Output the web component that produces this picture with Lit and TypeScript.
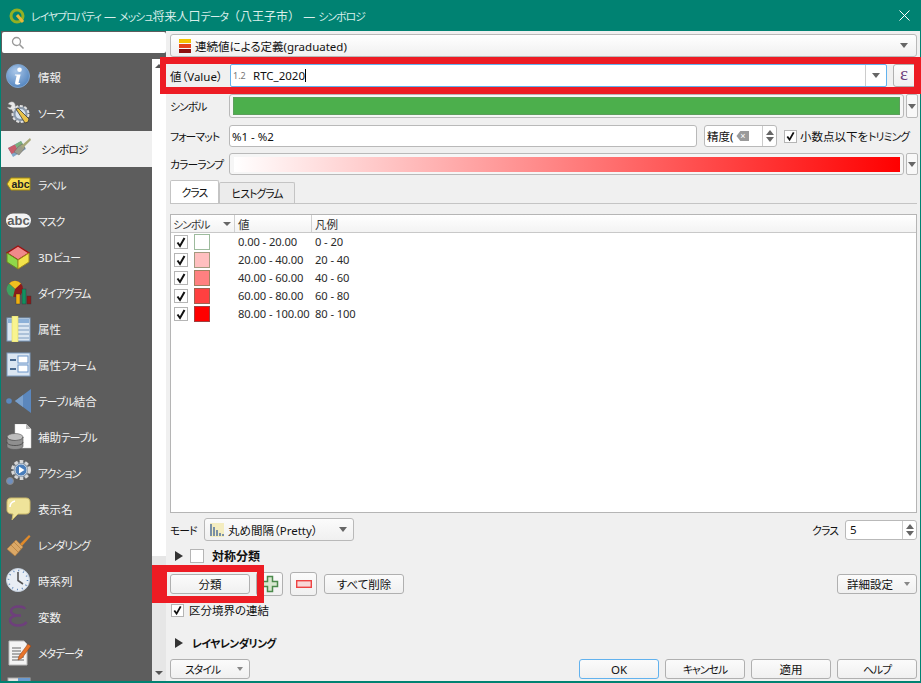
import { LitElement, html, css, svg } from 'lit';
import { customElement } from 'lit/decorators.js';

const ICONS: Record<string, unknown> = {
  info: svg`<defs><radialGradient id="ig" cx=".4" cy=".3" r=".8"><stop offset="0" stop-color="#a9c6e8"/><stop offset="1" stop-color="#4a7ebb"/></radialGradient></defs>
    <circle cx="12" cy="12" r="11.5" fill="url(#ig)" stroke="#7fa3cc"/>
    <circle cx="13.5" cy="5.8" r="2.3" fill="#fff"/>
    <path d="M9 10.5h5.6l-2 8c-.1.6.3.7 1.6.4l-.2 1.1c-1.8.9-5.3 1.2-4.9-1.300l1.500-6.900c-.5-.2-1.200-.2-1.800-.2z" fill="#fff"/>`,
  source: svg`<path d="M2 4c2-3 6-3 7 0 .5 1.500 0 2.500 1 3.500l2 2-3 3-2.500-2.500c-1.500-.5-4.500-.2-5-3l3 .5 1-2z" fill="#e8e8e8" stroke="#888" stroke-width=".5"/>
    <circle cx="14.500" cy="14" r="8" fill="#8a98a8" stroke="#e0e0e0" stroke-width="2" stroke-dasharray="3 1.600"/>
    <circle cx="14.500" cy="14" r="5" fill="#d7e3f0"/>
    <path d="M10 9l2-1 11 11-1 3-3 1z" fill="#e8c24a" stroke="#3a3a3a" stroke-width=".8"/>`,
  symbology: svg`<path d="M2 12l13-7 5 8-13 8z" fill="#7fa6c8"/>
    <path d="M2 12l7-3.500 3 6-6.500 3.500z" fill="#c95c6a"/>
    <path d="M9 8.500l6-3.500 2.500 4-6 3.500z" fill="#7bb07b"/>
    <path d="M12 11l4-3 3 4-6 7-5-3z" fill="#9a9a8a" stroke="#666" stroke-width=".5"/>
    <path d="M15 10L24 2l1 2-8 8z" fill="#a8a878"/>`,
  label: svg`<path d="M1 12l4-6h19v12H5z" fill="#f7dc4d" stroke="#a38a10"/>
    <text x="14.500" y="16" text-anchor="middle" class="abc">abc</text>`,
  mask: svg`<rect x="0" y="5.500" width="25" height="14" rx="7" fill="#f4f4f4"/>
    <text x="12.500" y="17" text-anchor="middle" class="abc2">abc</text>`,
  view3d: svg`<path d="M12 2l11 7-11 7L1 9z" fill="#f08a8a" stroke="#a01010" stroke-width="1.400"/>
    <path d="M1 9l11 7v9L1 18z" fill="#8fd84a" stroke="#6a8a20"/>
    <path d="M23 9L12 16v9l11-7z" fill="#f2e24a" stroke="#a08a20"/>`,
  diagram: svg`<circle cx="9" cy="9" r="8" fill="#8d1a1a"/>
    <path d="M9 9L3 3.500A8 8 0 0 1 15 3.500z" fill="#f0c020"/>
    <path d="M9 9L3 3.500A8 8 0 0 0 7 17z" fill="#3fa060"/>
    <rect x="10" y="14" width="4" height="10" fill="#f0b010" stroke="#333" stroke-width=".4"/>
    <rect x="16" y="9" width="4" height="15" fill="#119060" stroke="#333" stroke-width=".4"/>
    <rect x="21" y="16" width="4" height="8" fill="#8d1a1a" stroke="#333" stroke-width=".4"/>`,
  attr: svg`<rect x="1" y="2" width="23" height="23" fill="#dbe6f2" stroke="#7c9cc0"/>
    <rect x="2" y="3" width="21" height="4" fill="#8cb0d8"/>
    <path d="M11 10h12M11 14h12M11 18h12M11 22h12" stroke="#7c9cc0"/>
    <rect x="6" y="0" width="6" height="26" fill="#f8f490" stroke="#e0d860" stroke-width=".6"/>`,
  form: svg`<rect x="1" y="1" width="23" height="23" fill="#dbe6f2" stroke="#7c9cc0"/>
    <path d="M4 8h6M4 17h6" stroke="#4a6a90" stroke-width="2"/>
    <rect x="12" y="4" width="10" height="7" fill="#fff" stroke="#6a94c8"/>
    <rect x="12" y="13" width="10" height="7" fill="#fff" stroke="#6a94c8"/>`,
  join: svg`<circle cx="3" cy="13" r="2.800" fill="#5b87bd"/>
    <path d="M25 1v24L9 13z" fill="#5b87bd"/><path d="M17 7v12l-8-6z" fill="#7aa0cc"/>`,
  aux: svg`<path d="M9 0h11l5 5v19H9z" fill="#fff" stroke="#ccc" stroke-width=".5"/>
    <path d="M20 0v5h5z" fill="#bbb"/>
    <ellipse cx="9" cy="13" rx="8" ry="3.500" fill="#bdbdbd" stroke="#555" stroke-width=".6"/>
    <path d="M1 13v9c0 2 3 3.500 8 3.500s8-1.500 8-3.500v-9c0 2-3 3.500-8 3.500s-8-1.500-8-3.500z" fill="#8f8f8f" stroke="#555" stroke-width=".6"/>
    <path d="M1 18c0 2 3 3.500 8 3.500s8-1.500 8-3.500" fill="none" stroke="#444" stroke-width=".8"/>`,
  action: svg`<circle cx="15" cy="10" r="8.500" fill="#7e8a96" stroke="#d8d8d8" stroke-width="3" stroke-dasharray="3.500 2"/>
    <circle cx="15" cy="10" r="6" fill="#4a7ebb" stroke="#cfd8e4"/>
    <path d="M13 6.500l5.500 3.500-5.500 3.500z" fill="#fff"/>
    <circle cx="4" cy="21" r="3.500" fill="#6f8fbf" stroke="#8a8a8a"/>`,
  display: svg`<path d="M5 2h15c3 0 4 2 4 4v8c0 3-2 4-4 4h-8l-6 6 1-6c-3 0-6-1-6-4V6c0-3 2-4 4-4z" fill="#efe39a" stroke="#cbb96a"/>
    <path d="M4 11c0-3 1-5 5-6" stroke="#fff" stroke-width="1.500" fill="none"/>`,
  rendering: svg`<path d="M14 12L23 3l1.500 1.500L16 14z" fill="#e08a2a"/>
    <path d="M1 17l9-9 7 7-8 9z" fill="#dba866" stroke="#b07a3a" stroke-width=".6"/>
    <path d="M5 13l7 7M8 10l7 7" stroke="#b07a3a" stroke-width=".7"/>`,
  time: svg`<circle cx="12" cy="12" r="11.500" fill="#e9eef4" stroke="#c4d0de"/>
    <circle cx="12" cy="12" r="9.500" fill="none" stroke="#5b87bd" stroke-width="1.600" stroke-dasharray="1 3.970"/>
    <path d="M12 4v8.500l5 3.500" fill="none" stroke="#555" stroke-width="1.600"/>`,
  variable: svg`<path d="M19 5c-1-2-3-2.500-6-2.500-5 0-8 2-8 4.500 0 3 3 4 6 4.500-4 .5-7 2-7 5 0 3 4 5 8 5 4 0 7-1 8.500-3.500M8 11.500h7" fill="none" stroke="#6e3f7c" stroke-width="2.600"/>`,
  metadata: svg`<path d="M3 1h15l3 3v21H3z" fill="#f4f4f4" stroke="#bbb"/>
    <path d="M6 8h9M6 11h9M6 14h10M6 17h12M6 20h12" stroke="#666"/>
    <path d="M13 16L22 4l3 2-9 12-4 2z" fill="#e8742a" stroke="#8a3a10" stroke-width=".5"/>`,
  server: svg`<rect x="2" y="2" width="22" height="22" fill="#e4e4e4" stroke="#aaa"/><rect x="12" y="2" width="12" height="6" fill="#6a9ad0"/>`,
};

const NAV = [
  ['info', '情報'], ['source', 'ソース'], ['symbology', 'シンボロジ'], ['label', 'ラベル'],
  ['mask', 'マスク'], ['view3d', '3Dビュー'], ['diagram', 'ダイアグラム'], ['attr', '属性'],
  ['form', '属性フォーム'], ['join', 'テーブル結合'], ['aux', '補助テーブル'], ['action', 'アクション'],
  ['display', '表示名'], ['rendering', 'レンダリング'], ['time', '時系列'], ['variable', '変数'],
  ['metadata', 'メタデータ'], ['server', ''],
];

const CLASSES = [
  { value: '0.00 - 20.00', legend: '0 - 20', fill: '#ffffff', edge: '#9dbb9d' },
  { value: '20.00 - 40.00', legend: '20 - 40', fill: '#ffbfbf', edge: '#a39a80' },
  { value: '40.00 - 60.00', legend: '40 - 60', fill: '#ff8080', edge: '#a08060' },
  { value: '60.00 - 80.00', legend: '60 - 80', fill: '#ff4040', edge: '#a06050' },
  { value: '80.00 - 100.00', legend: '80 - 100', fill: '#ff0000', edge: '#a04040' },
];

// the system font in the shot has much narrower katakana than Noto, so runs get their own span
const jp = (text: string) =>
  text.split(/([\u30A0-\u30FF]+)/).map((part, i) => (i % 2 ? html`<span class="k">${part}</span>` : part));

const check = svg`<svg width="12" height="12" viewBox="0 0 12 12"><path d="M2.500 6.500l2.500 3.500 4.500-8" fill="none" stroke="#111" stroke-width="2"/></svg>`;
const arrow = html`<span class="arrow"></span>`;
const spinner = html`<span class="spin"><i class="up"></i><i class="down"></i></span>`;

@customElement('app-root')
export class AppRoot extends LitElement {
  static styles = css`
    :host {
      display: block;
      position: relative;
      width: 921px;
      height: 683px;
      overflow: hidden;
      background: #f0f0f0;
      color: #111;
      font: 11.500px "Noto Sans", "Noto Sans CJK JP", sans-serif;
      font-feature-settings: "palt";
    }
    .k { font-size: 10.800px; letter-spacing: -.9px; font-feature-settings: "palt"; }
    .window {
      display: flex;
      flex-direction: column;
      height: 100%;
      box-sizing: border-box;
      border: solid #008272;
      border-width: 0 1px 2px 1px;
    }
    .title {
      flex: none;
      display: flex;
      align-items: center;
      height: 31px;
      margin: 0 -1px;
      padding: 0 11px 0 9px;
      background: #008272;
      color: #d8eeea;
      font-size: 12px;
      font-feature-settings: normal;
    }
    .title svg { margin-right: 6px; }
    .title svg:last-child { margin-right: 0; }
    .title > span { flex: 1; }
    .body { flex: 1; display: flex; min-height: 0; }

    .side { flex: none; width: 165px; display: flex; flex-direction: column; background: #5d5d5d; }
    .search {
      flex: none;
      height: 21px;
      margin: 1px 0 0 1px;
      background: #fff;
      border-radius: 2px;
      display: flex;
      align-items: center;
      padding-left: 9px;
    }
    .side-row { flex: 1; min-height: 0; display: flex; padding-top: 6px; }
    .nav { flex: none; width: 151px; overflow: hidden; }
    .nav-item {
      display: flex;
      align-items: center;
      height: 36px;
      padding-left: 5px;
      color: #f2f2f2;
    }
    .nav-item svg { flex: none; width: 26px; height: 26px; margin-right: 6px; }
    .nav-item.sel { background: #f0f0f0; color: #111; }
    .nav-item.sel > span { margin-left: 3px; }
    .abc { font: bold 10.500px "Liberation Sans", sans-serif; fill: #222; }
    .abc2 { font: bold 13px "Liberation Sans", sans-serif; fill: #5d5d5d; }
    .vscroll {
      flex: none;
      width: 14px;
      display: flex;
      flex-direction: column;
      justify-content: space-between;
      align-items: center;
      background: linear-gradient(#fff 0, #fff 497px, #e6e6e6 497px);
      padding: 5px 0 6px;
      box-sizing: border-box;
    }
    .vscroll i { width: 0; height: 0; border: 4px solid transparent; }
    .vscroll .t { border-bottom-color: #555; border-top-width: 0; }
    .vscroll .b { border-top-color: #555; border-bottom-width: 0; }

    .main { flex: 1; min-width: 0; padding: 3px 3px 0 4px; display: flex; flex-direction: column; }
    .row { flex: none; display: flex; align-items: center; }
    .lbl { flex: none; width: 59px; white-space: nowrap; }
    .box {
      flex: none;
      box-sizing: border-box;
      border: 1px solid #b9b9b9;
      border-radius: 3px;
      background: #fff;
      display: flex;
      align-items: center;
    }
    .btn {
      flex: none;
      box-sizing: border-box;
      border: 1px solid #b0b0b0;
      border-radius: 3px;
      background: linear-gradient(#fbfbfb, #f0f0f0);
      display: flex;
      align-items: center;
      justify-content: center;
      height: 20px;
      width: 80px;
    }
    .arrow {
      flex: none;
      width: 0;
      height: 0;
      border: 4.500px solid transparent;
      border-top: 5px solid #666;
      border-bottom-width: 0;
    }
    .combo { height: 23px; padding: 0 8px 0 7px; background: linear-gradient(#fff, #f0f0f0); justify-content: space-between; }
    .combo > div { display: flex; align-items: center; gap: 3px; }

    .value-row { height: 23px; margin-top: 7px; }
    .value-input {
      width: 657px;
      height: 23px;
      border-color: #62b2ee;
      border-radius: 2px;
      margin-left: 1px;
    }
    .value-input .num { color: #777; font-size: 9px; width: 22px; padding-left: 2px; box-sizing: border-box; }
    .value-input .txt { flex: 1; }
    .caret { display: inline-block; width: 1px; height: 13px; background: #000; vertical-align: -2px; }
    .value-input .drop {
      width: 20px;
      height: 21px;
      border-left: 1px solid #ccc;
      display: flex;
      align-items: center;
      justify-content: center;
    }
    .eps {
      width: 24px;
      height: 23px;
      margin-left: 6px;
      padding: 0 2px 3px 0;
      color: #6e3f7c;
      font: 19px "Liberation Serif", serif;
    }
    .swatch-btn { width: 675px; height: 24px; padding: 2px 3px; background: #f6f6f6; }
    .swatch-btn div { width: 100%; height: 100%; }
    .green { background: #4caf4c; box-shadow: inset 0 0 0 1px #5c9f5c; }
    .ramp { background: linear-gradient(90deg, #fff, #f00); }
    .mini {
      flex: none;
      box-sizing: border-box;
      width: 12px;
      margin-left: 2px;
      border: 1px solid #b9b9b9;
      border-radius: 2px;
      background: #f8f8f8;
      display: flex;
      align-items: center;
      justify-content: center;
    }
    .sym-row { height: 24px; margin-top: 7px; }
    .fmt-row { height: 22px; margin-top: 7px; }
    .fmt-input { width: 468px; height: 22px; padding-left: 2px; }
    .prec {
      width: 73px;
      height: 22px;
      margin-left: 7px;
      padding-left: 2px;
      overflow: hidden;
    }
    .clear {
      width: 13px;
      height: 10px;
      background: #9a9a9a;
      clip-path: polygon(30% 0, 100% 0, 100% 100%, 30% 100%, 0 50%);
      color: #fff;
      font: 9px/10px "Liberation Sans", sans-serif;
      text-align: center;
      margin-left: 3px;
    }
    .spin {
      flex: none;
      width: 14px;
      height: 100%;
      border-left: 1px solid #ccc;
      display: flex;
      flex-direction: column;
      align-items: center;
      justify-content: center;
      gap: 2px;
      box-sizing: border-box;
      margin-left: auto;
    }
    .spin i { width: 0; height: 0; border: 4px solid transparent; }
    .spin .up { border-bottom: 5px solid #666; border-top-width: 0; }
    .spin .down { border-top: 5px solid #666; border-bottom-width: 0; }
    .cb {
      flex: none;
      box-sizing: border-box;
      width: 13px;
      height: 13px;
      border: 1px solid #b5b5b5;
      background: #fff;
      display: flex;
      align-items: center;
      justify-content: center;
    }
    .trim { margin-left: 7px; }
    .trim > span:last-child { margin-left: 3px; white-space: nowrap; }
    .ramp-row { height: 22px; margin-top: 6px; }
    .ramp-row .swatch-btn { height: 22px; padding: 3px 3px 2px 4px; }

    .tabs { flex: none; display: flex; align-items: flex-end; height: 23px; margin-top: 6px; border-bottom: 1px solid #c4c4c4; box-sizing: border-box; }
    .tab {
      box-sizing: border-box;
      height: 23px;
      width: 49px;
      border: 1px solid #c4c4c4;
      border-bottom: none;
      border-radius: 2px 2px 0 0;
      background: #fff;
      display: flex;
      align-items: center;
      justify-content: center;
    }
    .tab.off { width: 76px; height: 21px; background: #ececec; }

    .table {
      flex: none;
      box-sizing: border-box;
      height: 299px;
      margin-top: 10px;
      border: 1px solid #b5b5b5;
      background: #fff;
    }
    .thead, .trow { display: grid; grid-template-columns: 64px 77px 1fr; }
    .thead {
      height: 18px;
      background: linear-gradient(#fff, #f3f3f3);
      border-bottom: 1px solid #c8c8c8;
      box-sizing: border-box;
      color: #333;
    }
    .thead > div { display: flex; align-items: center; padding-left: 3px; border-right: 1px solid #d0d0d0; }
    .thead > div:last-child { border-right: none; }
    .thead .first { padding-left: 2px; padding-right: 3px; justify-content: space-between; }
    .thead .arrow { border-width: 4px; border-bottom-width: 0; }
    .trow { height: 18px; align-items: center; color: #2a2a2a; font-size: 11.200px; letter-spacing: -.1px; }
    .trow > div { padding-left: 3px; white-space: nowrap; }
    .trow > div:not(.first) { padding-bottom: 2px; }
    .trow .first { display: flex; align-items: center; gap: 6px; }
    .trow .cb { width: 14px; height: 14px; }
    .sw { box-sizing: border-box; width: 16px; height: 16px; border: 1px solid; }

    .mode-row { height: 23px; margin-top: 5px; }
    .mode-row .lbl { width: 34px; }
    .mode-combo { width: 150px; height: 23px; padding: 0 6px 0 4px; background: linear-gradient(#fbfbfb, #f0f0f0); }
    .mode-combo span:nth-child(2) { flex: 1; margin-left: 3px; white-space: nowrap; }
    .right { margin-left: auto; display: flex; align-items: center; }
    .class-spin { width: 72px; height: 20px; margin-left: 7px; padding-left: 4px; }

    .group { height: 18px; }
    .tri { width: 0; height: 0; border: 5.500px solid transparent; border-left: 8px solid #333; border-right-width: 0; margin-left: 5px; }
    .group b { font-weight: 700; font-size: 12px; }
    .group b .k { letter-spacing: -.6px; }
    .sym-group { margin-top: 6px; }
    .sym-group .cb { width: 14px; height: 14px; margin-left: 7px; }
    .sym-group b { margin-left: 8px; }

    .btn-row { height: 24px; margin-top: 7px; }
    .icon-btn { width: 27px; height: 24px; margin-left: 7px; }
    .wide { margin-left: 7px; }
    .drop-btn { justify-content: space-between; padding: 0 6px 0 9px; }
    .drop-btn .arrow { border-width: 3.500px; border-top-width: 4px; border-bottom-width: 0; border-top-color: #888; }

    .link-row { height: 18px; margin-top: 5px; }
    .link-row .cb { margin-left: 1px; }
    .link-row > span:last-child { margin-left: 5px; }
    .layer { margin-top: 15px; }
    .layer b { margin-left: 9px; }

    .foot { height: 20px; margin-top: 7px; }
    .foot .style { padding: 0 6px 0 14px; }
    .foot .group-right { margin-left: auto; display: flex; gap: 6px; }
    .foot .ok { border-color: #62b2ee; }

    .mark { position: absolute; box-sizing: border-box; border: solid #ed1c24; pointer-events: none; }
    .mark.value { left: 160px; top: 57px; width: 761px; height: 37px; border-width: 7px 7px 7px 6px; }
    .mark.classify { left: 152px; top: 565px; width: 112px; height: 38px; border-width: 7px 7px 7px 15px; }
  `;

  renderNav() {
    return NAV.map(
      ([icon, name]) => html`
        <div class="nav-item ${icon === 'symbology' ? 'sel' : ''}">
          <svg viewBox="0 0 26 26">${ICONS[icon]}</svg><span>${jp(name)}</span>
        </div>
      `,
    );
  }

  render() {
    return html`
      <div class="window">
        <div class="title">
          <svg width="16" height="16" viewBox="0 0 16 16">
            <circle cx="8" cy="8" r="6" fill="none" stroke="#93b023" stroke-width="3"/>
            <path d="M8 7l6 7" stroke="#e8b93a" stroke-width="3"/>
          </svg>
          <span>${jp('レイヤプロパティ — メッシュ将来人口データ（八王子市） — シンボロジ')}</span>
          <svg width="11" height="11" viewBox="0 0 11 11"><path d="M.5.5l10 10M10.500.5l-10 10" stroke="#fff" stroke-width="1"/></svg>
        </div>
        <div class="body">
          <div class="side">
            <div class="search">
              <svg width="14" height="14" viewBox="0 0 14 14"><circle cx="5.500" cy="5.500" r="4" fill="none" stroke="#999" stroke-width="1.300"/><path d="M8.500 8.500l4 4" stroke="#999" stroke-width="1.600"/></svg>
            </div>
            <div class="side-row">
              <div class="nav">${this.renderNav()}</div>
              <div class="vscroll"><i class="t"></i><i class="b"></i></div>
            </div>
          </div>
          <div class="main">
            <div class="row box combo">
              <div>
                <svg width="14" height="16" viewBox="0 0 14 16">
                  <rect x="1" y="1" width="12" height="4" fill="#f5c400"/><rect x="1" y="6" width="12" height="4" fill="#e8431a"/><rect x="1" y="11" width="12" height="4" fill="#8d1010"/>
                </svg>
                <span>連続値による定義(graduated)</span>
              </div>
              ${arrow}
            </div>

            <div class="row value-row">
              <span class="lbl">値（Value）</span>
              <div class="box value-input">
                <span class="num">1.2</span>
                <span class="txt">RTC_2020<span class="caret"></span></span>
                <span class="drop">${arrow}</span>
              </div>
              <div class="btn eps">ε</div>
            </div>

            <div class="row sym-row">
              <span class="lbl">${jp('シンボル')}</span>
              <div class="box swatch-btn"><div class="green"></div></div>
              <div class="mini" style="height:24px">${arrow}</div>
            </div>

            <div class="row fmt-row">
              <span class="lbl">${jp('フォーマット')}</span>
              <div class="box fmt-input">%1 - %2</div>
              <div class="box prec"><span>精度(</span><span class="clear">×</span>${spinner}</div>
              <div class="row trim"><span class="cb">${check}</span><span>${jp('小数点以下をトリミング')}</span></div>
            </div>

            <div class="row ramp-row">
              <span class="lbl">${jp('カラーランプ')}</span>
              <div class="box swatch-btn"><div class="ramp"></div></div>
              <div class="mini" style="height:22px">${arrow}</div>
            </div>

            <div class="tabs">
              <div class="tab">${jp('クラス')}</div>
              <div class="tab off">${jp('ヒストグラム')}</div>
            </div>

            <div class="table">
              <div class="thead">
                <div class="first"><span>${jp('シンボル')}</span>${arrow}</div>
                <div>値</div>
                <div>凡例</div>
              </div>
              ${CLASSES.map(
                (c) => html`
                  <div class="trow">
                    <div class="first">
                      <span class="cb">${check}</span>
                      <span class="sw" style="background:${c.fill};border-color:${c.edge}"></span>
                    </div>
                    <div>${c.value}</div>
                    <div>${c.legend}</div>
                  </div>
                `,
              )}
            </div>

            <div class="row mode-row">
              <span class="lbl">${jp('モード')}</span>
              <div class="box mode-combo">
                <svg width="16" height="16" viewBox="0 0 16 16">
                  <rect x="1" y="1" width="14" height="14" fill="#f4edc0"/>
                  <path d="M2 2v12M5 5v9M8 8v6M11 11v3M14 12v2" stroke="#3b5f99" stroke-width="1.300"/>
                </svg>
                <span>丸め間隔（Pretty）</span>
                ${arrow}
              </div>
              <div class="right">
                <span>${jp('クラス')}</span>
                <div class="box class-spin"><span>5</span>${spinner}</div>
              </div>
            </div>

            <div class="row group sym-group">
              <span class="tri"></span><span class="cb"></span><b>対称分類</b>
            </div>

            <div class="row btn-row">
              <div class="btn">分類</div>
              <div class="btn icon-btn" style="margin-left:6px">
                <svg width="18" height="18" viewBox="0 0 18 18"><path d="M6.500 1.500h5v5h5v5h-5v5h-5v-5h-5v-5h5z" fill="#d8e8d0" stroke="#4c8a4c" stroke-width="1.500"/></svg>
              </div>
              <div class="btn icon-btn">
                <svg width="16" height="8" viewBox="0 0 16 8"><rect x=".7" y=".7" width="14.600" height="6.600" fill="#f8d8d8" stroke="#ee4444" stroke-width="1.400"/></svg>
              </div>
              <div class="btn wide">すべて削除</div>
              <div class="right"><div class="btn drop-btn"><span>詳細設定</span>${arrow}</div></div>
            </div>

            <div class="row link-row">
              <span class="cb">${check}</span><span>区分境界の連結</span>
            </div>

            <div class="row group layer"><span class="tri"></span><b>${jp('レイヤレンダリング')}</b></div>

            <div class="row foot">
              <div class="btn drop-btn style"><span>${jp('スタイル')}</span>${arrow}</div>
              <div class="group-right">
                <div class="btn ok">OK</div>
                <div class="btn">${jp('キャンセル')}</div>
                <div class="btn">適用</div>
                <div class="btn">${jp('ヘルプ')}</div>
              </div>
            </div>
          </div>
        </div>
      </div>
      <div class="mark value"></div>
      <div class="mark classify"></div>
    `;
  }
}
